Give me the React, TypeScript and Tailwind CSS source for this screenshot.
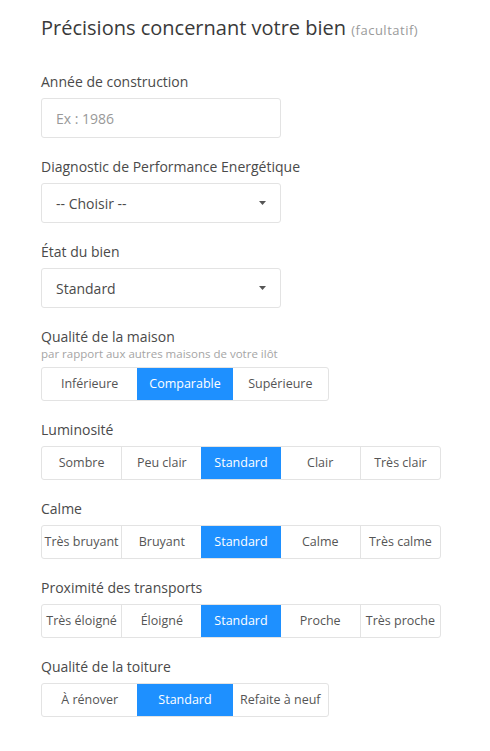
import React from "react";

const Label: React.FC<{ children: React.ReactNode }> = ({ children }) => (
  <div className="text-[14px] leading-[20px] text-[#4a4a4a]">{children}</div>
);

const Select: React.FC<{ value: string }> = ({ value }) => (
  <div className="mt-[6px] w-[240px] h-[40px] border border-[#e3e3e3] rounded-[3px] bg-white flex items-center justify-between pl-[14px] pr-[13px]">
    <span className="text-[14px] text-[#4a4a4a]">{value}</span>
    <svg width="7" height="4" viewBox="0 0 7 4" className="mr-[1px]">
      <path d="M0 0h7L3.5 4z" fill="#555" />
    </svg>
  </div>
);

const Segmented: React.FC<{ options: string[]; active: number; wide?: boolean }> = ({ options, active, wide }) => (
  <div
    className={
      "mt-[6px] flex border border-[#e3e3e3] rounded-[3px] bg-white overflow-hidden " +
      (wide ? "w-[400px]" : "w-[288px]")
    }
  >
    {options.map((o, i) => (
      <div
        key={o}
        className={
          "flex-1 h-[32px] flex items-center justify-center text-[12.5px] whitespace-nowrap " +
          (i === active
            ? "bg-[#1e90ff] text-white"
            : "text-[#555] " + (i > 0 && i - 1 !== active ? "border-l border-[#e3e3e3]" : ""))
        }
      >
        {o}
      </div>
    ))}
  </div>
);

export default function App() {
  return (
    <div className="min-h-[751px] bg-white px-[41px] pt-[14px] pb-[20px]" style={{ fontFamily: '"Open Sans", "Noto Sans", sans-serif' }}>
      <h2 className="text-[20px] leading-[28px] text-[#3a3a3a]">
        Précisions concernant votre bien{" "}
        <span className="text-[13px] tracking-[0.5px] text-[#9a9a9a]">(facultatif)</span>
      </h2>

      <div className="mt-[28px]">
        <Label>Année de construction</Label>
        <div className="mt-[6px] w-[240px] h-[40px] border border-[#e3e3e3] rounded-[3px] flex items-center pl-[14px]">
          <span className="text-[14px] text-[#999]">Ex : 1986</span>
        </div>
      </div>

      <div className="mt-[19px]">
        <Label>Diagnostic de Performance Energétique</Label>
        <Select value="-- Choisir --" />
      </div>

      <div className="mt-[19px]">
        <Label>État du bien</Label>
        <Select value="Standard" />
      </div>

      <div className="mt-[19px]">
        <Label>Qualité de la maison</Label>
        <div className="text-[11.5px] leading-[14px] text-[#a5a5a5]">par rapport aux autres maisons de votre ilôt</div>
        <Segmented options={["Inférieure", "Comparable", "Supérieure"]} active={1} />
      </div>

      <div className="mt-[19px]">
        <Label>Luminosité</Label>
        <Segmented options={["Sombre", "Peu clair", "Standard", "Clair", "Très clair"]} active={2} wide />
      </div>

      <div className="mt-[19px]">
        <Label>Calme</Label>
        <Segmented options={["Très bruyant", "Bruyant", "Standard", "Calme", "Très calme"]} active={2} wide />
      </div>

      <div className="mt-[19px]">
        <Label>Proximité des transports</Label>
        <Segmented options={["Très éloigné", "Éloigné", "Standard", "Proche", "Très proche"]} active={2} wide />
      </div>

      <div className="mt-[19px]">
        <Label>Qualité de la toiture</Label>
        <Segmented options={["À rénover", "Standard", "Refaite à neuf"]} active={1} />
      </div>
    </div>
  );
}
